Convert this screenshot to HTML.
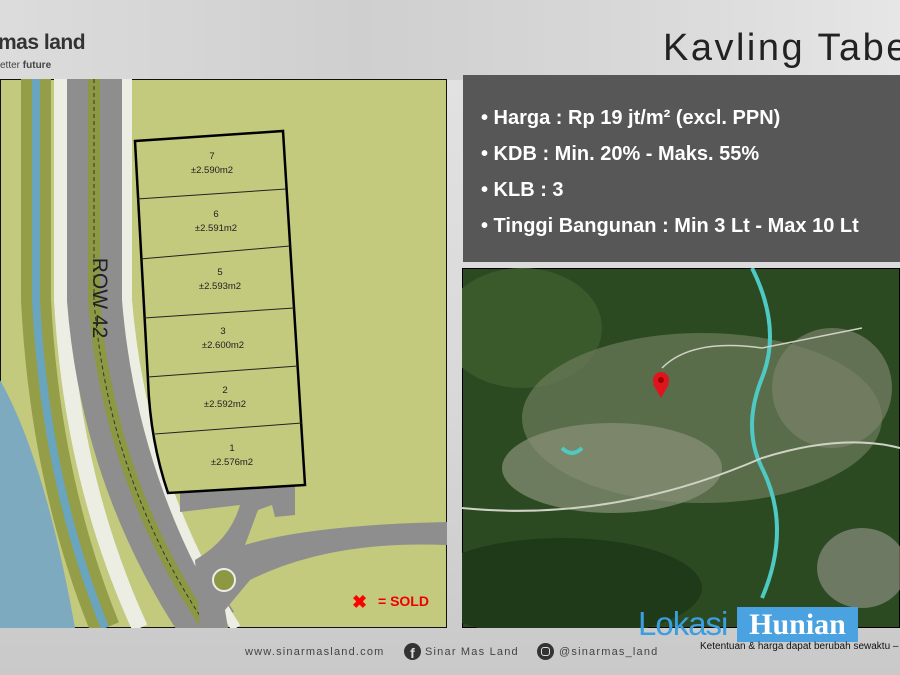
<!DOCTYPE html>
<html><head><meta charset="utf-8"><style>
body{margin:0;width:900px;height:675px;overflow:hidden;position:relative;font-family:"Liberation Sans",sans-serif;background:linear-gradient(#e4e4e4,#d8d8d8 60%,#c9c9c9)}
.abs{position:absolute}
</style></head><body>
<div class="abs" style="left:0;top:0;width:900px;height:80px;background:linear-gradient(90deg,#dcdcdc,#cfcfcf 40%,#d8d8d8 70%,#e6e6e6)"></div>
<div class="abs" style="left:-2px;top:31px;font-size:21px;font-weight:bold;color:#333;letter-spacing:-0.5px">mas land</div>
<div class="abs" style="left:0;top:60px;font-size:10px;color:#444">etter <b>future</b></div>
<div class="abs" style="left:663px;top:27px;font-size:38px;letter-spacing:2.5px;color:#222;white-space:nowrap">Kavling Tabel</div>

<svg class="abs" style="left:0;top:79px" width="447" height="549" viewBox="0 79 447 549">
<rect x="0" y="79" width="447" height="549" fill="#c3c97d" stroke="#111" stroke-width="2"/>
<path d="M0 380 Q45 460 75 628 L0 628Z" fill="#7eaac0"/>
<g fill="none">
<path d="M36 79 L36 300 Q45 480 105 628" stroke="#949d48" stroke-width="30"/>
<path d="M36 79 L36 300 Q45 480 105 628" stroke="#6aa5c0" stroke-width="8"/>
<path d="M62 79 L62 300 Q72 480 140 628" stroke="#eceee4" stroke-width="16"/>
<path d="M96 79 L96 300 Q110 480 210 628" stroke="#8e8e8e" stroke-width="58"/>
<path d="M94 79 L94 300 Q108 480 208 628" stroke="#8d9842" stroke-width="12"/>
<path d="M94 79 L94 300 Q108 480 208 628" stroke="#333" stroke-width="1" stroke-dasharray="4 3"/>
<path d="M127 79 L127 300 Q142 480 236 628" stroke="#eceee4" stroke-width="10"/>
</g>
<path d="M180 492 L295 482 L295 515 L275 517 L272 505 L258 510 L245 545 Q310 525 447 522 L447 545 Q330 540 250 580 L225 610 L228 628 L200 628 L195 560 Q230 540 240 505 L180 512Z" fill="#8e8e8e"/>
<circle cx="224" cy="580" r="11" fill="#8e9844" stroke="#eee" stroke-width="2"/>
<path d="M135 141 L283 131 L305 485 L168 493 Q150 440 148 380 Z" fill="#c3c97d" stroke="#000" stroke-width="2.5"/>
<g stroke="#222" stroke-width="1">
<line x1="137" y1="199" x2="286" y2="189"/>
<line x1="140" y1="259" x2="290" y2="246"/>
<line x1="144" y1="318" x2="294" y2="308"/>
<line x1="148" y1="377" x2="298" y2="366"/>
<line x1="155" y1="434" x2="302" y2="423"/>
</g>
<g font-size="9.5" fill="#222" text-anchor="middle" font-family="Liberation Sans">
<text x="212" y="159">7</text><text x="212" y="173">±2.590m2</text>
<text x="216" y="217">6</text><text x="216" y="231">±2.591m2</text>
<text x="220" y="275">5</text><text x="220" y="289">±2.593m2</text>
<text x="223" y="334">3</text><text x="223" y="348">±2.600m2</text>
<text x="225" y="393">2</text><text x="225" y="407">±2.592m2</text>
<text x="232" y="451">1</text><text x="232" y="465">±2.576m2</text>
</g>
<text x="100" y="298" font-size="21" fill="#222" transform="rotate(90 100 298)" text-anchor="middle" dy="7">ROW 42</text>
<text x="352" y="608" font-size="18" fill="#f00" font-weight="bold">✖</text>
<text x="378" y="606" font-size="14" fill="#e00" font-weight="bold">= SOLD</text>
</svg>

<div class="abs" style="left:463px;top:75px;width:437px;height:187px;background:#575757"></div>
<div class="abs" style="left:481px;top:100px;color:#fff;font-size:20px;font-weight:bold;line-height:36px;white-space:nowrap">
• Harga : Rp 19 jt/m² (excl. PPN)<br>• KDB : Min. 20% - Maks. 55%<br>• KLB : 3<br>• Tinggi Bangunan : Min 3 Lt - Max 10 Lt</div>

<svg class="abs" style="left:462px;top:268px" width="438" height="360">
<rect width="438" height="360" fill="#2b4a22" stroke="#000" stroke-width="2"/>
<ellipse cx="60" cy="60" rx="80" ry="60" fill="#3a5a2c"/>
<ellipse cx="100" cy="320" rx="140" ry="50" fill="#1f3a18"/>
<ellipse cx="240" cy="150" rx="180" ry="85" fill="#6b7a58" opacity=".75"/>
<ellipse cx="150" cy="200" rx="110" ry="45" fill="#8a9179" opacity=".7"/>
<ellipse cx="370" cy="120" rx="60" ry="60" fill="#7a8268" opacity=".7"/>
<ellipse cx="400" cy="300" rx="45" ry="40" fill="#9a9a90" opacity=".6"/>
<path d="M290 0 Q320 60 300 110 Q280 160 300 200 Q330 260 300 330" stroke="#4fc9c3" stroke-width="4" fill="none"/>
<path d="M100 180 q10 10 20 0" stroke="#4fc9c3" stroke-width="4" fill="none"/>
<path d="M0 240 Q150 255 300 190 Q380 165 438 180" stroke="#cfd2c4" stroke-width="2" fill="none"/>
<path d="M200 100 Q230 70 300 80 L400 60" stroke="#cfd2c4" stroke-width="1.5" fill="none"/>
<circle cx="199" cy="112" r="8" fill="#e0141c"/><circle cx="199" cy="112" r="3" fill="#900"/>
<path d="M199 130 L207 116 L191 116Z" fill="#e0141c"/>
</svg>

<div class="abs" style="left:638px;top:605px;font-size:33px;color:#3a9ee0;letter-spacing:-1px">Lokasi</div>
<div class="abs" style="left:737px;top:607px;width:121px;height:35px;background:#4aa3e0;color:#fff;font-family:'Liberation Serif',serif;font-weight:bold;font-size:30px;line-height:35px;text-align:center">Hunian</div>
<div class="abs" style="left:700px;top:641px;font-size:10px;color:#111;white-space:nowrap">Ketentuan &amp; harga dapat berubah sewaktu –</div>

<div class="abs" style="left:245px;top:646px;font-size:11px;color:#444;letter-spacing:1.2px;white-space:nowrap">www.sinarmasland.com</div>
<div class="abs" style="left:404px;top:643px;width:17px;height:17px;border-radius:50%;background:#333;color:#ddd;font-weight:bold;font-size:14px;text-align:center;line-height:20px">f</div>
<div class="abs" style="left:425px;top:646px;font-size:11px;color:#444;letter-spacing:1.2px">Sinar Mas Land</div>
<div class="abs" style="left:537px;top:643px;width:17px;height:17px;border-radius:50%;background:#333"><div style="margin:4px;width:7px;height:7px;border:1.5px solid #ddd;border-radius:3px"></div></div>
<div class="abs" style="left:559px;top:646px;font-size:11px;color:#444;letter-spacing:1.2px">@sinarmas_land</div>
</body></html>
